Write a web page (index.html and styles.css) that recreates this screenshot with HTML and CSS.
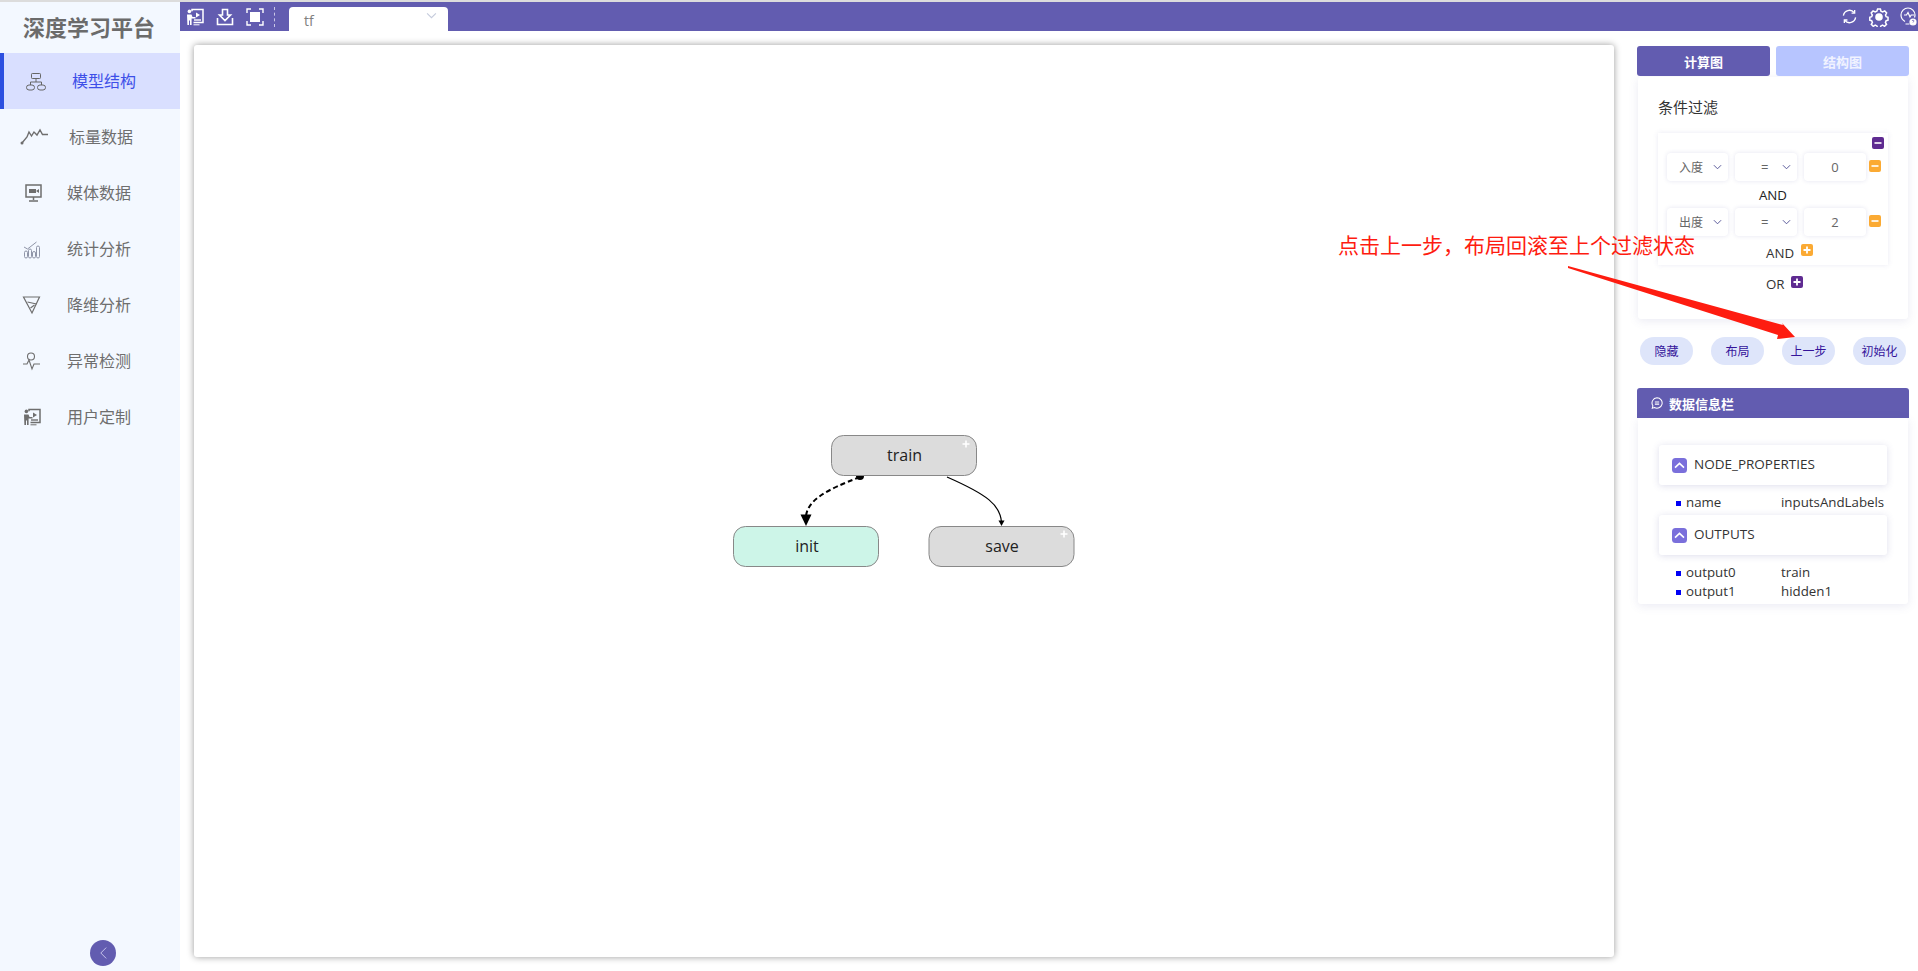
FILE: index.html
```html
<!DOCTYPE html>
<html lang="zh-CN">
<head>
<meta charset="utf-8">
<title>深度学习平台</title>
<link rel="stylesheet" href="styles.css">
</head>
<body>
<svg class="defs" width="0" height="0">
  <symbol id="i-teach" viewBox="0 0 18 18">
    <circle cx="3.4" cy="3.4" r="1.8" fill="currentColor"/>
    <path d="M1 6.5h4.5l1 2.5h3v1.4H5.6V17H4V12.5H3V17H1.4z" fill="currentColor"/>
    <path d="M6 3.2V1.400h11v13.2H7.500" fill="none" stroke="currentColor" stroke-width="1.500"/>
    <path d="M8 12h7" stroke="currentColor" stroke-width="1.400"/>
    <path d="M10 4.600l4 2.400-4 2.400z" fill="currentColor"/>
    <path d="M7.500 16.800h6" stroke="currentColor" stroke-width="1"/>
  </symbol>
  <symbol id="i-minus" viewBox="0 0 12 12">
    <rect width="12" height="12" rx="2" fill="currentColor"/>
    <path d="M2.500 6h7" stroke="#fff" stroke-width="1.600"/>
  </symbol>
  <symbol id="i-plus" viewBox="0 0 12 12">
    <rect width="12" height="12" rx="2" fill="currentColor"/>
    <path d="M2.500 6h7M6 2.500v7" stroke="#fff" stroke-width="1.800"/>
  </symbol>
  <symbol id="i-down" viewBox="0 0 10 6">
    <path d="M1 1l4 4 4-4" fill="none" stroke="currentColor" stroke-width="1"/>
  </symbol>
  <symbol id="i-up" viewBox="0 0 15 15">
    <rect width="15" height="15" rx="3.500" fill="#7a6fdb"/>
    <path d="M3 9.600l4.500-4.200 4.500 4.200" fill="none" stroke="#fff" stroke-width="1.600"/>
  </symbol>
</svg>

<div class="app">
  <aside class="sidebar">
    <div class="brand">深度学习平台</div>
    <nav class="nav">
      <a class="nav-item active">
        <svg class="nav-icon" viewBox="0 0 24 24" width="24" height="24"><g fill="none" stroke="currentColor" stroke-width="1"><rect x="7.500" y="4.500" width="9" height="5" rx=".8"/><rect x="2.500" y="16" width="8" height="5" rx="2.500"/><rect x="13.500" y="16" width="8" height="5" rx="2.500"/><path d="M12 9.500v3.500M6.500 16v-3h11v3"/></g></svg>
        <span class="nav-label nav-label-a">模型结构</span>
      </a>
      <a class="nav-item">
        <svg class="nav-icon" viewBox="0 0 24 24" width="24" height="24"><path d="M-2 18L3 12 5 7 7.500 11 10 7 13 10 16 5 18.500 9.500H24" fill="none" stroke="currentColor" stroke-width="1.400"/><circle cx="-2" cy="18" r="1.500" fill="currentColor"/></svg>
        <span class="nav-label nav-label-b">标量数据</span>
      </a>
      <a class="nav-item">
        <svg class="nav-icon" viewBox="0 0 24 24" width="24" height="24"><g fill="none" stroke="currentColor" stroke-width="1.500"><rect x="2" y="4" width="15" height="12"/><path d="M9.500 16v3M5 20h9"/></g><rect x="5" y="8" width="7" height="4" fill="currentColor"/><path d="M12 10l3-2v4z" fill="currentColor"/></svg>
        <span class="nav-label">媒体数据</span>
      </a>
      <a class="nav-item">
        <svg class="nav-icon" viewBox="0 0 24 24" width="24" height="24"><g fill="none" stroke="#8f95a8" stroke-width="1"><rect x=".500" y="14" width="3" height="7" rx="1.500"/><rect x="4.500" y="12" width="3" height="9" rx="1.500"/><rect x="8.500" y="14.500" width="3" height="6.500" rx="1.500"/><rect x="12.500" y="9" width="3" height="12" rx="1.500"/><path d="M0 10l3.500 2 9-7"/></g></svg>
        <span class="nav-label">统计分析</span>
      </a>
      <a class="nav-item">
        <svg class="nav-icon" viewBox="0 0 24 24" width="24" height="24"><g fill="none" stroke="currentColor" stroke-width="1.200"><path d="M-.5 4h16L8 20z"/><path d="M3.500 9l9 2M6.500 15l4-3"/></g></svg>
        <span class="nav-label">降维分析</span>
      </a>
      <a class="nav-item">
        <svg class="nav-icon" viewBox="0 0 24 24" width="24" height="24"><g fill="none" stroke="currentColor" stroke-width="1.100"><circle cx="7" cy="7.500" r="3.500"/><path d="M-1 15h4l2-4 3 9 2-5h6"/></g></svg>
        <span class="nav-label">异常检测</span>
      </a>
      <a class="nav-item">
        <svg class="nav-icon nav-icon-teach" width="18" height="18"><use href="#i-teach"/></svg>
        <span class="nav-label nav-label-c">用户定制</span>
      </a>
    </nav>
    <button class="collapse" type="button">
      <svg viewBox="0 0 10 14" width="9" height="14"><path d="M8 1L2 7l6 6" fill="none" stroke="#cfcdf0" stroke-width="1"/></svg>
    </button>
  </aside>

  <main class="main">
    <header class="toolbar">
      <div class="tools">
        <svg width="18" height="18"><use href="#i-teach"/></svg>
        <svg viewBox="0 0 18 18" width="18" height="18"><g fill="none" stroke="currentColor" stroke-width="1.600"><path d="M6.500 1.500h5V7h3L9 12.500 3.500 7h3z"/><path d="M1.500 10v6.500h15V10"/></g></svg>
        <svg viewBox="0 0 18 18" width="18" height="18"><g fill="none" stroke="currentColor" stroke-width="1.400"><path d="M1 5V1h4M13 1h4v4M17 13v4h-4M5 17H1v-4"/></g><rect x="4" y="4" width="10" height="10" fill="currentColor"/></svg>
      </div>
      <span class="divider"></span>
      <div class="tab">
        <span>tf</span>
        <svg class="tab-caret" width="11" height="7"><use href="#i-down"/></svg>
      </div>
      <div class="tools-right">
        <svg viewBox="0 0 16 16" width="15" height="15"><g fill="none" stroke="currentColor" stroke-width="1.400"><path d="M1.500 7A6.500 6.500 0 0 1 13 3.800M14.500 9A6.500 6.500 0 0 1 3 12.200"/><path d="M13.500 1v3.300h-3.300M2.500 15v-3.300h3.300"/></g></svg>
        <svg viewBox="0 0 20 20" width="20" height="20"><path d="M8.500 1.500h3l.6 2.400 1.800.8 2.200-1.200 2 2.200-1.200 2.200.7 1.800 2 .6v3l-2 .6-.8 1.800 1.200 2.100-2.100 2.100-2.100-1.200-1.800.8-.6 2.200h-3l-.6-2.200-1.800-.8-2.100 1.200-2.100-2.100 1.200-2.100-.8-1.800-2-.6v-3l2-.6.7-1.800-1.200-2.200 2-2.200 2.200 1.200 1.800-.8z" transform="translate(.6 .6) scale(.94)" fill="none" stroke="currentColor" stroke-width="1.600"/><circle cx="10" cy="10" r="3.800" fill="currentColor"/></svg>
        <svg class="bulb" viewBox="0 0 18 20" width="18" height="20"><g fill="none" stroke="currentColor" stroke-width="1.200"><path d="M5 14.500C2.500 13 1 11 1 8a7 7 0 0 1 14 0c0 1-.2 1.700-.5 2.500"/><path d="M4 8h2.500l1.500-2.500 2 4.500 1.200-2H14M5.500 17h4"/></g><circle cx="13" cy="15" r="3.600" fill="currentColor"/><path d="M12 14c.3-1 2-1 2 0 0 .7-1 .7-1 1.500M13 17v.1" fill="none" stroke="#625cb0" stroke-width=".8"/></svg>
      </div>
    </header>

    <div class="content">
      <section class="canvas">
        <svg class="graph" viewBox="194 45 1420 912" width="1420" height="912">
          <path d="M860 477C826 490 808 500 806 516" fill="none" stroke="#000" stroke-width="2" stroke-dasharray="5 3"/>
          <circle cx="860" cy="476" r="4" fill="#000"/>
          <path d="M800.500 514.500h11L806 526z" fill="#000"/>
          <path d="M947 477C988 495 1000 505 1001.500 522" fill="none" stroke="#000" stroke-width="1.200"/>
          <path d="M998.500 520.500h6L1001.500 526z" fill="#000"/>
          <g class="node">
            <rect x="831.500" y="435.500" width="145" height="40" rx="12"/>
            <text x="904.500" y="455">train</text>
            <path class="node-plus" d="M962.500 444h7M966 440.500v7"/>
          </g>
          <g class="node node-root">
            <rect x="733.500" y="526.500" width="145" height="40" rx="12"/>
            <text x="807" y="546">init</text>
          </g>
          <g class="node">
            <rect x="929" y="526.500" width="145" height="40" rx="12"/>
            <text x="1002" y="546">save</text>
            <path class="node-plus" d="M1060.500 534h7M1064 530.500v7"/>
          </g>
        </svg>
      </section>

      <aside class="panel">
        <div class="tabs">
          <button class="tabs-btn on" type="button">计算图</button>
          <button class="tabs-btn" type="button">结构图</button>
        </div>
        <div class="card filter">
          <h3 class="filter-title">条件过滤</h3>
          <div class="filter-box">
            <div class="filter-top"><svg class="mini purple" width="12" height="12"><use href="#i-minus"/></svg></div>
            <div class="filter-row">
              <div class="select wide"><span>入度</span><svg width="9" height="6"><use href="#i-down"/></svg></div>
              <div class="select op"><span>=</span><svg width="9" height="6"><use href="#i-down"/></svg></div>
              <div class="select val">0</div>
              <svg class="mini orange" width="12" height="12"><use href="#i-minus"/></svg>
            </div>
            <div class="and-label">AND</div>
            <div class="filter-row">
              <div class="select wide"><span>出度</span><svg width="9" height="6"><use href="#i-down"/></svg></div>
              <div class="select op"><span>=</span><svg width="9" height="6"><use href="#i-down"/></svg></div>
              <div class="select val">2</div>
              <svg class="mini orange" width="12" height="12"><use href="#i-minus"/></svg>
            </div>
            <div class="add-row">AND<svg class="mini orange" width="12" height="12"><use href="#i-plus"/></svg></div>
          </div>
          <div class="add-row or-row">OR<svg class="mini purple" width="12" height="12"><use href="#i-plus"/></svg></div>
        </div>
        <div class="actions">
          <button class="pill" type="button">隐藏</button>
          <button class="pill" type="button">布局</button>
          <button class="pill" type="button">上一步</button>
          <button class="pill" type="button">初始化</button>
        </div>
        <div class="info-head">
          <svg viewBox="0 0 14 14" width="12" height="12"><g fill="none" stroke="#fff" stroke-width="1.200"><path d="M7 1a6 6 0 1 1-3 11.200L1.500 13l.7-2.700A6 6 0 0 1 7 1z"/><path d="M4.500 5.800h5M4.500 8.300h5"/></g></svg>
          数据信息栏
        </div>
        <div class="card info">
          <div class="group"><svg width="15" height="15"><use href="#i-up"/></svg>NODE_PROPERTIES</div>
          <ul class="kv kv-one">
            <li><span class="k">name</span><span>inputsAndLabels</span></li>
          </ul>
          <div class="group"><svg width="15" height="15"><use href="#i-up"/></svg>OUTPUTS</div>
          <ul class="kv">
            <li><span class="k">output0</span><span>train</span></li>
            <li><span class="k">output1</span><span>hidden1</span></li>
          </ul>
        </div>
      </aside>
    </div>
  </main>
</div>

<div class="note">点击上一步，布局回滚至上个过滤状态</div>
<svg class="note-arrow" viewBox="0 0 1918 971" width="1918" height="971"><path d="M1568 266L1783 325 1782 323 1795 337 1777 339 1778 335 1568 268z" fill="#fe1c10"/></svg>
</body>
</html>
```

FILE: styles.css
```css
* { box-sizing: border-box; }
html, body { margin: 0; height: 100%; }
body {
  border-top: 2px solid #dcdcdc;
  overflow: hidden;
  background: #fff;
  font-family: "Open Sans", "Noto Sans CJK SC", sans-serif;
  font-size: 13px;
  color: #333;
}
.defs { position: absolute; }
button { font-family: inherit; border: 0; padding: 0; }

.app { display: flex; height: 969px; }

/* ---- sidebar ---- */
.sidebar {
  width: 180px;
  flex: none;
  display: flex;
  flex-direction: column;
  background: #f3f8ff;
}
.brand {
  height: 51px;
  padding-left: 23px;
  line-height: 50px;
  font-size: 22px;
  font-weight: bold;
  color: #6b6b6b;
  white-space: nowrap;
}
.nav { flex: 1; }
.nav-item {
  display: flex;
  align-items: center;
  height: 56px;
  padding: 0 0 2px 24px;
  font-size: 16px;
  color: #6e6e6e;
}
.nav-item.active {
  background: #d9dfff;
  border-left: 4px solid #2c4fe0;
  padding-left: 20px;
  color: #3d4fe8;
}
.nav-item.active .nav-icon { color: #666; }
.nav-icon { flex: none; overflow: visible; margin-top: 2px; }
.nav-icon-teach { margin-left: -1px; }
.nav-label { margin-left: 19px; }
.nav-label-a { margin-left: 24px; }
.nav-label-b { margin-left: 21px; }
.nav-label-c { margin-left: 26px; }
.collapse {
  width: 26px;
  height: 26px;
  margin: 0 0 5px 90px;
  border-radius: 50%;
  background: #625cb0;
  display: flex;
  align-items: center;
  justify-content: center;
}

/* ---- top bar ---- */
.main { flex: 1; min-width: 0; display: flex; flex-direction: column; }
.toolbar {
  height: 29px;
  flex: none;
  display: flex;
  align-items: center;
  background: #625cb0;
  color: #fff;
}
.tools { display: flex; gap: 12px; padding-left: 6px; }
.divider {
  height: 20px;
  margin-left: 10px;
  border-left: 1px dashed #c9c7e6;
}
.tab {
  align-self: flex-end;
  position: relative;
  width: 159px;
  height: 24px;
  margin-left: 14px;
  padding-left: 15px;
  line-height: 27px;
  font-size: 14px;
  color: #808080;
  background: #fff;
  border-radius: 4px 4px 0 0;
}
.tab-caret { position: absolute; top: 5px; right: 11px; color: #c5cbdc; }
.tools-right {
  margin-left: auto;
  display: flex;
  align-items: center;
  gap: 12px;
}
.bulb { margin-left: -1px; }

/* ---- main content ---- */
.content { flex: 1; display: flex; padding: 14px 0 0 14px; }
.canvas {
  width: 1420px;
  height: 912px;
  flex: none;
  background: #fff;
  box-shadow: 0 0 7px rgba(0, 0, 0, .4);
  border-radius: 3px;
}
.graph { display: block; }
.node rect { fill: #dcdcdc; stroke: #888; stroke-width: 1; }
.node-root rect { fill: #cdf5e8; }
.node text {
  font-size: 16px;
  fill: #222;
  text-anchor: middle;
  dominant-baseline: central;
}
.node-plus { stroke: #fff; stroke-width: 1.600; }

/* ---- right panel ---- */
.panel { width: 272px; flex: none; margin: 1px 0 0 23px; }
.tabs { display: flex; gap: 6px; }
.tabs-btn {
  flex: 1;
  height: 30px;
  border-radius: 3px;
  background: #b7c5ff;
  color: #f1f3ff;
  font-size: 13px;
  font-weight: bold;
}
.tabs-btn.on { background: #625cb0; color: #fff; }
.card {
  margin: 1px 1px 0;
  background: #fff;
  border-radius: 3px;
  box-shadow: 0 2px 10px rgba(90, 90, 160, .13);
}
.filter { height: 242px; padding: 0 20px; }
.filter-title {
  margin: 0;
  padding-top: 19px;
  height: 56px;
  font-size: 15px;
  font-weight: normal;
  color: #333;
}
.filter-box {
  height: 132px;
  padding: 4px 0 0 9px;
  box-shadow: 0 0 5px rgba(90, 90, 160, .13);
}
.filter-top { height: 16px; display: flex; justify-content: flex-end; padding-right: 4px; }
.filter-row { display: flex; align-items: center; gap: 7px; height: 28px; }
.select {
  display: flex;
  align-items: center;
  justify-content: space-between;
  height: 28px;
  background: #fff;
  border-radius: 4px;
  box-shadow: 0 0 4px rgba(90, 90, 160, .16);
  font-size: 12px;
  color: #666;
  padding: 0 6px 0 12px;
}
.select svg { color: #4a4a90; }
.wide { width: 61px; }
.op { width: 62px; padding-left: 26px; font-size: 13px; }
.val { width: 62px; justify-content: center; padding: 0; font-size: 13px; }
.filter-row .mini { margin: 0 0 3px -4px; }
.and-label {
  height: 27px;
  line-height: 28px;
  margin-left: -9px;
  text-align: center;
  font-size: 13.300px;
  color: #222;
}
.add-row {
  display: flex;
  align-items: flex-start;
  gap: 7px;
  padding: 8px 0 0 99px;
  font-size: 13.300px;
  line-height: 18px;
  color: #333;
}
.add-row .mini { flex: none; }
.or-row { padding: 10px 0 0 108px; gap: 6px; }
.or-row .mini { margin-top: 1px; }
.mini { display: block; }
.mini.purple { color: #5f2b91; }
.mini.orange { color: #fbaa33; }

.actions { display: flex; justify-content: space-between; padding: 0 3px; margin-top: 18px; }
.pill {
  width: 53px;
  height: 28px;
  border-radius: 14px;
  background: #dee5fa;
  color: #34149a;
  font-size: 12px;
}
.info-head {
  display: flex;
  align-items: center;
  gap: 6px;
  height: 30px;
  margin-top: 23px;
  padding-left: 14px;
  border-radius: 3px 3px 0 0;
  background: #625cb0;
  color: #fff;
  font-size: 13px;
  font-weight: bold;
}
.info { margin-top: 0; height: 186px; padding: 27px 21px 0; }
.group {
  display: flex;
  align-items: center;
  gap: 7px;
  height: 40px;
  padding: 0 0 2px 13px;
  border-radius: 3px;
  background: #fff;
  box-shadow: 0 1px 7px rgba(90, 90, 160, .2);
  font-size: 13.500px;
  color: #333;
}
.group svg { margin-top: 2px; }
.kv { list-style: none; margin: 0; padding: 8px 0 0 17px; height: 77px; font-size: 13.300px; color: #333; }
.kv-one { height: 30px; }
.kv li { display: flex; height: 19px; line-height: 19px; align-items: center; white-space: nowrap; }
.k { width: 105px; flex: none; position: relative; padding-left: 10px; }
.k::before {
  content: "";
  position: absolute;
  left: 0;
  top: 8px;
  width: 5px;
  height: 5px;
  background: #0000f5;
}

/* ---- red note on top of the page ---- */
.note {
  position: absolute;
  left: 1338px;
  top: 231px;
  font-size: 21px;
  line-height: 28px;
  color: #fe1c10;
  white-space: nowrap;
}
.note-arrow { position: absolute; left: 0; top: 0; pointer-events: none; }
```
